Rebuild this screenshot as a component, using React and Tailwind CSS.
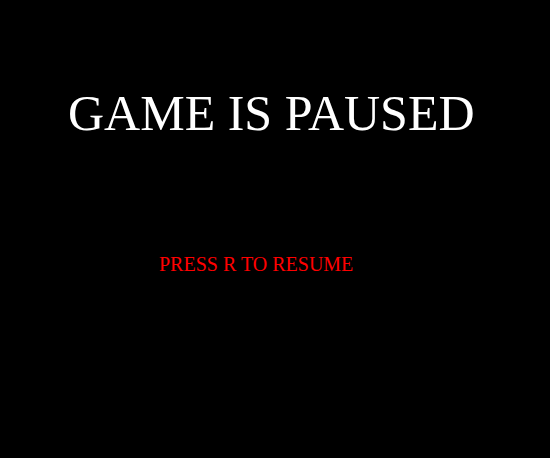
export default function App() {
    return (
        <div className="w-full min-h-screen h-[458px] bg-black font-['Liberation_Serif',serif] flex flex-col items-start pt-[88px] pl-[68px]">
            <h1 className="text-white text-[50px] leading-none whitespace-nowrap">
                GAME IS PAUSED
            </h1>
            <p className="mt-[116px] ml-[91px] text-[#ff0000] text-[20px] leading-none whitespace-nowrap">
                PRESS R TO RESUME
            </p>
        </div>
    );
}
